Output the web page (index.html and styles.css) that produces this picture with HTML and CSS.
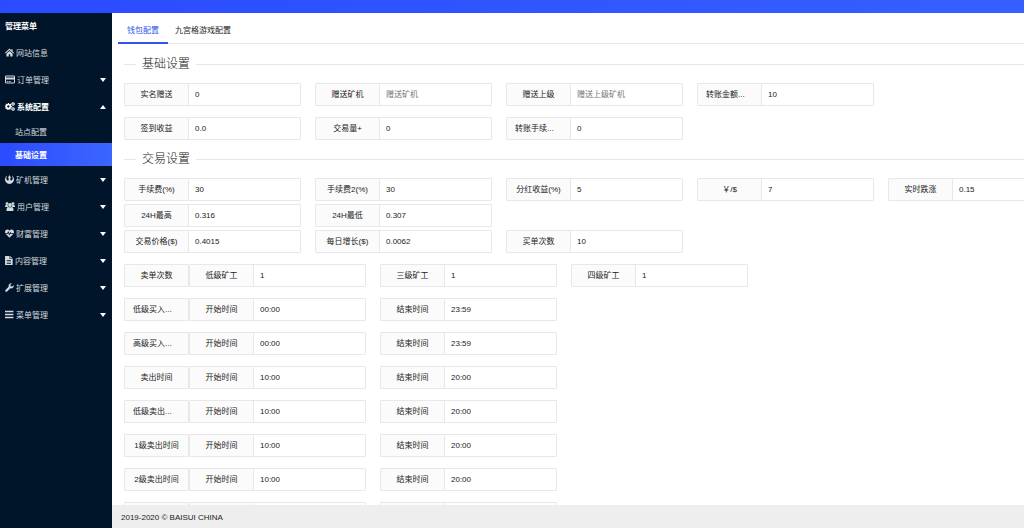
FILE: index.html
```
<!DOCTYPE html>
<html lang="zh-CN">

<head>
    <meta charset="UTF-8">
    <meta name="viewport" content="width=device-width, initial-scale=1.0">
    <title>基础设置</title>
    <link rel="stylesheet" href="styles.css">
</head>

<body>

    <header class="topbar"></header>

    <div class="layout">

        <!-- 左侧菜单 -->
        <nav class="sidebar">
            <h1 class="menu-title">管理菜单</h1>
            <ul class="menu">
                <li><a href="#">
                    <svg class="icon" viewBox="0 0 16 16"><path d="M8 1 0 8.300l1.200 1.400L8 3.700l6.800 6 1.200-1.400-2.500-2.300V2h-2.300v2zM8 5.200 2.500 10v5h4.200v-4h2.600v4h4.200v-5z"/></svg>
                    网站信息</a></li>
                <li><a href="#">
                    <svg class="icon icon-wide" viewBox="0 0 18 16"><path fill-rule="evenodd" d="M2 1h14a2 2 0 0 1 2 2v10a2 2 0 0 1-2 2H2a2 2 0 0 1-2-2V3a2 2 0 0 1 2-2zM1.800 2.800v1.700h14.400V2.800zM1.800 8v5.200h14.400V8zM3 10.500h2.500V12H3zM6.500 10.500h4V12h-4z"/></svg>
                    订单管理<i class="arrow"></i></a></li>
                <li class="open"><a href="#">
                    <svg class="icon icon-wide" viewBox="0 0 18 16"><circle class="gear" cx="6" cy="8" r="3.600"/><circle class="teeth" cx="6" cy="8" r="5.400"/><circle class="gear-sm" cx="14.500" cy="3.600" r="2.200"/><circle class="gear-sm" cx="14.500" cy="12.400" r="2.200"/></svg>
                    系统配置<i class="arrow arrow-up"></i></a>
                    <ul class="submenu">
                        <li><a href="#">站点配置</a></li>
                        <li><a class="current" href="#">基础设置</a></li>
                    </ul>
                </li>
                <li><a href="#">
                    <svg class="icon" viewBox="0 0 16 16"><path d="M4 1A8 8 0 1 0 12 1C15 5 14 9.500 10.500 10 9.300 9.500 9.200 8 9.500 6L10.500 4.500 8 0 5.500 4.500 6.500 6C6.800 8 6.700 9.500 5.500 10 2 9.500 1 5 4 1z"/></svg>
                    矿机管理<i class="arrow"></i></a></li>
                <li><a href="#">
                    <svg class="icon icon-wide" viewBox="0 0 18 16"><circle cx="3.600" cy="2.800" r="2.500"/><circle cx="14.400" cy="2.800" r="2.500"/><circle cx="9" cy="5.300" r="3.400"/><path d="M0 9C0 6.500 1 5.500 2 5.500h3C4.700 7.500 5.500 8.500 6 9zM18 9c0-2.500-1-3.500-2-3.500h-3c.3 2-.5 3-1 3.500zM3 16c-1-3.500.5-7 3-7 2 1.200 4 1.200 6 0 2.500 0 4 3.500 3 7z"/></svg>
                    用户管理<i class="arrow"></i></a></li>
                <li><a href="#">
                    <svg class="icon" viewBox="0 0 16 16"><path d="M8 15.500 1.500 9h3.300l1-2.200 1.700 5.200 2-4 .6 1h4.400zM.5 7.500C-1 3.500 1.500 1 4.200 1 6 1 7.300 2.200 8 3.200 8.700 2.200 10 1 11.800 1 14.500 1 17 3.500 15.500 7.500h-4.600L9.400 5 7.700 8.500 6 3.500 4 7.500z"/></svg>
                    财富管理<i class="arrow"></i></a></li>
                <li><a href="#">
                    <svg class="icon icon-slim" viewBox="0 0 14 16"><path fill-rule="evenodd" d="M0 0h8v5.500h5.500V16H0zM9.200 0l4.300 4.300H9.200zM3 7.500v1.300h7.500V7.500zM3 10v1.300h7.500V10zM3 12.500v1.300h7.500v-1.300z"/></svg>
                    内容管理<i class="arrow"></i></a></li>
                <li><a href="#">
                    <svg class="icon" viewBox="0 0 16 16"><path d="M15.700 4.200c.6 3.500-2.700 6.400-6.200 5.200L3.700 15.200c-2 1.400-4.200-.8-2.900-2.900l5.800-5.800C5.600 3 8.500 0 12.300.5L9.800 3.200v2.600l2.600.6z"/></svg>
                    扩展管理<i class="arrow"></i></a></li>
                <li><a href="#">
                    <svg class="icon" viewBox="0 0 16 16"><path d="M0 1.500h15v2.400H0zM0 6.800h15v2.400H0zM0 12.100h15v2.400H0z"/></svg>
                    菜单管理<i class="arrow"></i></a></li>
            </ul>
        </nav>

        <!-- 主体内容 -->
        <div class="main">
            <form class="content">
                <div class="tabs">
                    <a class="tab tab-active" href="#">钱包配置</a>
                    <a class="tab" href="#">九宫格游戏配置</a>
                </div>

                <fieldset class="section">
                    <legend>基础设置</legend>
                    <div class="row">
                        <div class="item"><label for="real">实名赠送</label><input type="text" id="real" value="0"></div>
                        <div class="item"><label for="miner">赠送矿机</label><input type="text" id="miner" placeholder="赠送矿机"></div>
                        <div class="item"><label for="parent">赠送上级</label><input type="text" id="parent" placeholder="赠送上级矿机"></div>
                        <div class="item"><label class="cut" for="amount">转账金额...</label><input type="text" id="amount" value="10"></div>
                    </div>
                    <div class="row">
                        <div class="item"><label for="sign">签到收益</label><input type="text" id="sign" value="0.0"></div>
                        <div class="item"><label for="volume">交易量+</label><input type="text" id="volume" value="0"></div>
                        <div class="item"><label class="cut" for="fee">转账手续...</label><input type="text" id="fee" value="0"></div>
                    </div>
                </fieldset>

                <fieldset class="section">
                    <legend>交易设置</legend>
                    <div class="row row-tight">
                        <div class="item"><label for="fee1">手续费(%)</label><input type="text" id="fee1" value="30"></div>
                        <div class="item"><label for="fee2">手续费2(%)</label><input type="text" id="fee2" value="30"></div>
                        <div class="item"><label for="bonus">分红收益(%)</label><input type="text" id="bonus" value="5"></div>
                        <div class="item"><label for="rate">￥/$</label><input type="text" id="rate" value="7"></div>
                        <div class="item"><label for="change">实时跌涨</label><input type="text" id="change" value="0.15"></div>
                    </div>
                    <div class="row row-tight">
                        <div class="item"><label for="high">24H最高</label><input type="text" id="high" value="0.316"></div>
                        <div class="item"><label for="low">24H最低</label><input type="text" id="low" value="0.307"></div>
                    </div>
                    <div class="row">
                        <div class="item"><label for="price">交易价格($)</label><input type="text" id="price" value="0.4015"></div>
                        <div class="item"><label for="growth">每日增长($)</label><input type="text" id="growth" value="0.0062"></div>
                        <div class="item"><label for="buys">买单次数</label><input type="text" id="buys" value="10"></div>
                    </div>
                    <div class="row">
                        <span class="lead">卖单次数</span>
                        <div class="item"><label for="sell1">低级矿工</label><input type="text" id="sell1" value="1"></div>
                        <div class="item"><label for="sell3">三级矿工</label><input type="text" id="sell3" value="1"></div>
                        <div class="item"><label for="sell4">四级矿工</label><input type="text" id="sell4" value="1"></div>
                    </div>
                    <div class="row">
                        <span class="lead cut">低级买入...</span>
                        <div class="item"><label for="start1">开始时间</label><input type="text" id="start1" value="00:00"></div>
                        <div class="item"><label for="end1">结束时间</label><input type="text" id="end1" value="23:59"></div>
                    </div>
                    <div class="row">
                        <span class="lead cut">高级买入...</span>
                        <div class="item"><label for="start2">开始时间</label><input type="text" id="start2" value="00:00"></div>
                        <div class="item"><label for="end2">结束时间</label><input type="text" id="end2" value="23:59"></div>
                    </div>
                    <div class="row">
                        <span class="lead">卖出时间</span>
                        <div class="item"><label for="start3">开始时间</label><input type="text" id="start3" value="10:00"></div>
                        <div class="item"><label for="end3">结束时间</label><input type="text" id="end3" value="20:00"></div>
                    </div>
                    <div class="row">
                        <span class="lead cut">低级卖出...</span>
                        <div class="item"><label for="start4">开始时间</label><input type="text" id="start4" value="10:00"></div>
                        <div class="item"><label for="end4">结束时间</label><input type="text" id="end4" value="20:00"></div>
                    </div>
                    <div class="row">
                        <span class="lead">1级卖出时间</span>
                        <div class="item"><label for="start5">开始时间</label><input type="text" id="start5" value="10:00"></div>
                        <div class="item"><label for="end5">结束时间</label><input type="text" id="end5" value="20:00"></div>
                    </div>
                    <div class="row">
                        <span class="lead">2级卖出时间</span>
                        <div class="item"><label for="start6">开始时间</label><input type="text" id="start6" value="10:00"></div>
                        <div class="item"><label for="end6">结束时间</label><input type="text" id="end6" value="20:00"></div>
                    </div>
                    <div class="row">
                        <span class="lead"></span>
                        <div class="item"><label for="start7"></label><input type="text" id="start7"></div>
                        <div class="item"><label for="end7"></label><input type="text" id="end7"></div>
                    </div>
                </fieldset>
            </form>

            <footer class="footer">2019-2020 © BAISUI CHINA</footer>
        </div>
    </div>

</body>

</html>
```

FILE: styles.css
```
/* Reset */
* {
    margin: 0;
    padding: 0;
    box-sizing: border-box;
}

body {
    height: 100vh;
    display: flex;
    flex-direction: column;
    overflow: hidden;
    background-color: #fff;
    color: #222;
    font-family: "Liberation Sans", "Noto Sans CJK SC", sans-serif;
    font-size: 8px;
}

a {
    color: inherit;
    text-decoration: none;
}

ul {
    list-style: none;
}

.topbar {
    flex: none;
    height: 13px;
    background: linear-gradient(to right, #2b4bff, #3560ff);
}

.layout {
    flex: 1;
    display: flex;
    min-height: 0;
}

/* 左侧菜单 */
.sidebar {
    flex: none;
    width: 112px;
    background-color: #001529;
    color: #d5dade;
}

.menu-title {
    padding: 2px 0 0 5px;
    font-size: 8px;
    font-weight: bold;
    line-height: 24px;
    color: #fff;
}

.menu a {
    display: flex;
    align-items: center;
    gap: 2px;
    height: 27px;
    padding: 0 6px 0 5px;
}

.menu .open > a {
    color: #fff;
    font-weight: bold;
}

.menu .submenu a {
    height: 23px;
    padding-left: 15px;
}

.menu .submenu .current {
    background: linear-gradient(to right, #2b4bff, #3b66ff);
    color: #fff;
    font-weight: bold;
}

.icon {
    width: 9px;
    height: 9px;
    fill: currentColor;
}

.icon-wide {
    width: 10px;
}

.icon-slim {
    width: 8px;
}

.gear,
.teeth,
.gear-sm {
    fill: none;
    stroke: currentColor;
    stroke-width: 3;
}

.teeth {
    stroke-width: 2;
    stroke-dasharray: 2 2;
}

.gear-sm {
    stroke-width: 2;
}

.arrow {
    margin-left: auto;
    border: 3px solid transparent;
    border-top: 4px solid #fff;
    border-bottom-width: 0;
}

.arrow-up {
    border-top-width: 0;
    border-bottom: 4px solid #fff;
}

/* 主体 */
.main {
    flex: 1;
    display: flex;
    flex-direction: column;
    min-width: 0;
}

.content {
    flex: 1;
    min-height: 0;
    overflow: hidden;
    padding: 6px 0 0 6px;
}

.tabs {
    display: flex;
    border-bottom: 1px solid #e6e6e6;
}

.tab {
    min-width: 50px;
    height: 24px;
    padding: 0 7px;
    line-height: 24px;
    text-align: center;
}

.tab-active {
    height: 25px;
    margin-bottom: -1px;
    border-bottom: 2px solid #2f54eb;
    color: #2f54eb;
}

/* 表单 */
.section {
    margin: 12px 0 0 6px;
    border: 0;
    border-top: 1px solid #e6e6e6;
    min-width: 0;
}

.section + .section {
    margin-top: 0;
}

.section legend {
    margin-left: 12px;
    padding: 0 6px;
    font-size: 12px;
    font-weight: 300;
    line-height: 16px;
}

.row {
    display: flex;
    margin-bottom: 11px;
}

.section legend + .row {
    margin-top: 11px;
}

.section .row-tight,
.section legend + .row-tight {
    margin-bottom: 3px;
}

.item {
    flex: none;
    display: flex;
    width: 177px;
    margin-right: 14px;
    border: 1px solid #e8e8e8;
    border-radius: 1px;
}

.item label,
.lead {
    flex: none;
    width: 64px;
    height: 21px;
    padding: 0 8px;
    overflow: hidden;
    background-color: #fbfbfb;
    line-height: 21px;
    text-align: center;
    white-space: nowrap;
}

.item label {
    border-right: 1px solid #e8e8e8;
}

.lead {
    width: 65px;
    height: 23px;
    border: 1px solid #e8e8e8;
    border-radius: 1px;
}

.item .cut,
.lead.cut {
    text-align: left;
}

.item input {
    flex: 1;
    min-width: 0;
    padding-left: 6px;
    border: 0;
    outline: 0;
    background: none;
    color: inherit;
    font: inherit;
}

.item input::placeholder {
    color: #757575;
}

.footer {
    flex: none;
    padding: 3px 0 0 9px;
    background-color: #eee;
    line-height: 20px;
}
```
